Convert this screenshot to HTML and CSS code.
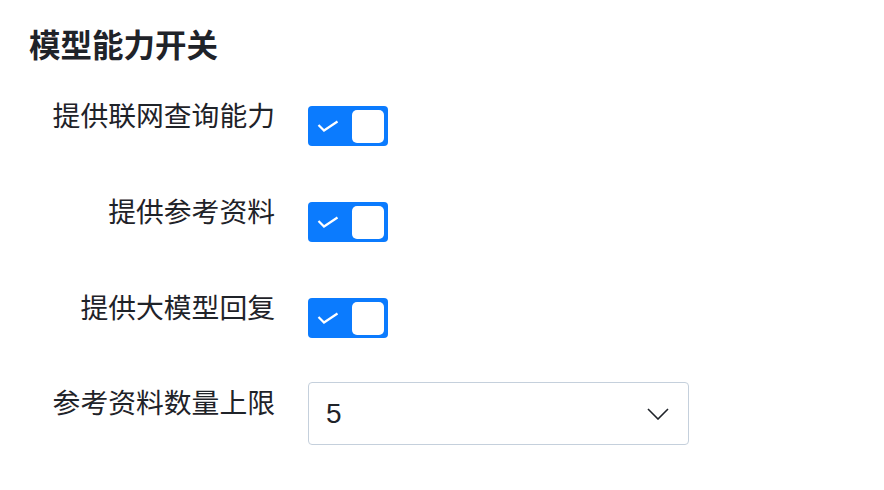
FILE: index.html
```html
<!DOCTYPE html>
<html><head>
<meta charset="utf-8">
<title>模型能力开关</title>
<link rel="stylesheet" href="styles.css">
</head><body>
<h3 class="title">模型能力开关</h3>
<div class="form">
<div class="row row-toggle">
<label class="label">提供联网查询能力</label>
<div class="switch on"><svg class="check" viewBox="0 0 22 12" width="22" height="12"><path d="M1.5 5 L7 10.5 L20.5 1.5" fill="none" stroke="#fff" stroke-width="2.2"/></svg><span class="knob"></span></div>
</div>
<div class="row row-toggle">
<label class="label">提供参考资料</label>
<div class="switch on"><svg class="check" viewBox="0 0 22 12" width="22" height="12"><path d="M1.5 5 L7 10.5 L20.5 1.5" fill="none" stroke="#fff" stroke-width="2.2"/></svg><span class="knob"></span></div>
</div>
<div class="row row-toggle">
<label class="label">提供大模型回复</label>
<div class="switch on"><svg class="check" viewBox="0 0 22 12" width="22" height="12"><path d="M1.5 5 L7 10.5 L20.5 1.5" fill="none" stroke="#fff" stroke-width="2.2"/></svg><span class="knob"></span></div>
</div>
<div class="row row-select">
<label class="label">参考资料数量上限</label>
<div class="select"><span class="value">5</span><svg class="chevron" viewBox="0 0 22 12" width="22" height="12"><path d="M1 1 L11 11 L21 1" fill="none" stroke="#1f2329" stroke-width="1.6"/></svg></div>
</div>
</div>
</body></html>
```

FILE: styles.css
```css
body {margin: 0; background: #fff; color: #1f2329; font-family: "Liberation Sans", "Noto Sans CJK SC", sans-serif;}
.title {margin: 31px 0 0 29px; font-size: 31.5px; line-height: 31px; font-weight: bold;}
.form {display: flex; flex-direction: column; padding-left: 28px; margin-top: 41px;}
.row {display: flex; align-items: flex-start; gap: 33px;}
.row + .row {margin-top: 53px;}
.row.row-select {margin-top: 44px;}
.label {width: 247px; text-align: right; font-size: 27.8px; line-height: 28px; flex: none;}
.row-toggle .switch {margin-top: 3px;}
.row-select .label {margin-top: 8px;}
.switch {width: 80px; height: 40px; border-radius: 4px; background: #0b7bfe; display: flex; align-items: center; justify-content: space-between; padding: 0 4px 0 9px; box-sizing: border-box;}
.check {display: block;}
.knob {width: 32px; height: 33px; background: #fff; border-radius: 5px;}
.select {width: 381px; height: 63px; box-sizing: border-box; border: 1.5px solid #c5d0dc; border-radius: 4px; display: flex; align-items: center; justify-content: space-between; padding: 0 19px 0 17px;}
.value {font-size: 28px;}
.chevron {display: block;}
```
